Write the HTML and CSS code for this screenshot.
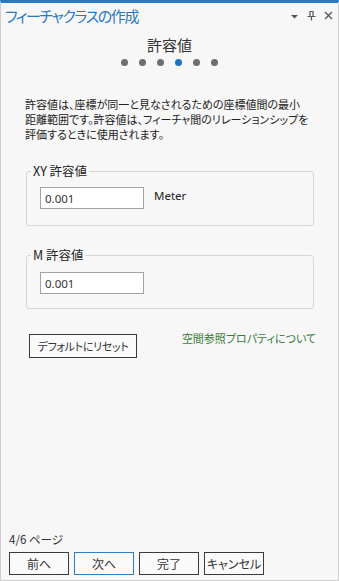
FILE: index.html
```html
<!DOCTYPE html>
<html lang="ja">
<head>
<meta charset="utf-8">
<title>フィーチャクラスの作成</title>
<link rel="stylesheet" href="styles.css">
</head>
<body>
<div class="panel">
  <div class="titlebar">
    <span class="title">フィーチャクラスの作成</span>
    <div class="tools">
      <svg class="ico" width="9" height="9" viewBox="0 0 9 9"><path d="M1 4 L8 4 L4.5 7.5 Z" fill="#555"/></svg>
      <svg class="ico" width="9" height="10" viewBox="0 0 9 10"><path d="M2.5 0.5 H6.5 M3 0.5 V5.5 M6 0.5 V5.5 M0.5 5.5 H8.5 M4.5 5.5 V9.5" stroke="#555" stroke-width="1.2" fill="none"/></svg>
      <svg class="ico" width="9" height="9" viewBox="0 0 9 9"><path d="M1 1 L8 8 M8 1 L1 8" stroke="#555" stroke-width="1.3" fill="none"/></svg>
    </div>
  </div>

  <div class="step">
    <div class="step-title">許容値</div>
    <div class="dots">
      <span class="dot"></span><span class="dot"></span><span class="dot"></span><span class="dot active"></span><span class="dot"></span><span class="dot"></span>
    </div>
  </div>

  <p class="desc">許容値は、座標が同一と見なされるための座標値間の最小<br>距離範囲です。許容値は、フィーチャ間のリレーションシップを<br>評価するときに使用されます。</p>

  <fieldset class="group">
    <legend>XY 許容値</legend>
    <div class="row">
      <input class="field" type="text" value="0.001">
      <span class="unit">Meter</span>
    </div>
  </fieldset>

  <fieldset class="group group-m">
    <legend>M 許容値</legend>
    <div class="row">
      <input class="field" type="text" value="0.001">
    </div>
  </fieldset>

  <div class="actions">
    <button class="btn reset">デフォルトにリセット</button>
    <a class="link" href="#">空間参照プロパティについて</a>
  </div>

  <div class="footer">
    <div class="pages">4/6 ページ</div>
    <div class="buttons">
      <button class="btn nav">前へ</button>
      <button class="btn nav primary">次へ</button>
      <button class="btn nav">完了</button>
      <button class="btn nav">キャンセル</button>
    </div>
  </div>
</div>
</body>
</html>
```

FILE: styles.css
```css
html, body {
  margin: 0;
  padding: 0;
}

body {
  font-family: "Noto Sans CJK JP", "Noto Sans", sans-serif;
  font-feature-settings: "palt";
  color: #222;
  background: #ffffff;
}

.panel {
  width: 339px;
  height: 581px;
  box-sizing: border-box;
  border-top: 3px solid #2a79c4;
  border-left: 1px solid #cfcfcf;
  border-right: 1px solid #cfcfcf;
  border-bottom: 1px solid #cfcfcf;
  background: #f7f7f7;
  display: flex;
  flex-direction: column;
}

.titlebar {
  height: 25px;
  display: flex;
  align-items: center;
  padding-left: 4px;
  padding-right: 5px;
}

.title {
  font-size: 15px;
  line-height: 20px;
  color: #2b78c2;
  letter-spacing: -1.4px;
}

.tools {
  margin-left: auto;
  display: flex;
  align-items: center;
  gap: 8px;
}

.ico {
  display: block;
}

.step {
  display: flex;
  flex-direction: column;
  align-items: center;
}

.step-title {
  margin-top: 7px;
  font-size: 15px;
  line-height: 20px;
  color: #333;
}

.dots {
  margin-top: 4px;
  display: flex;
  gap: 11px;
}

.dot {
  width: 7px;
  height: 7px;
  border-radius: 50%;
  background: #6e6e6e;
}

.dot.active {
  background: #1b74c2;
}

.desc {
  margin: 31px 0 0 0;
  padding-left: 24px;
  font-size: 11px;
  line-height: 15px;
  color: #222;
  white-space: nowrap;
}

.group {
  margin: 21px 24px 0 25px;
  padding: 0 12px 16px 13px;
  border: 1px solid #d6d6d6;
  border-radius: 3px;
  min-width: 0;
}

.group legend {
  margin-left: -9px;
  padding: 0 2px;
  font-size: 12.5px;
  line-height: 16px;
  color: #222;
}

.row {
  margin-top: 8px;
  display: flex;
  align-items: flex-start;
}

.field {
  width: 104px;
  height: 22px;
  box-sizing: border-box;
  margin: 0;
  padding: 0 4px;
  border: 1px solid #a2a2a2;
  background: #ffffff;
  font-family: "Noto Sans", "Noto Sans CJK JP", sans-serif;
  font-size: 11.5px;
  color: #333;
  outline: none;
}

.unit {
  margin-left: 10px;
  font-family: "Noto Sans", "Noto Sans CJK JP", sans-serif;
  font-size: 11.5px;
  line-height: 17px;
  color: #222;
}

.group-m {
  margin-top: 21px;
  padding-bottom: 14px;
}

.group-m .row {
  margin-top: 9px;
}

.actions {
  margin-top: 21px;
  padding: 0 22px 0 28px;
  display: flex;
  align-items: flex-start;
  justify-content: space-between;
}

.btn {
  margin: 0;
  padding: 0;
  box-sizing: border-box;
  border: 1px solid #3a3a3a;
  border-radius: 0;
  background: #fafafa;
  font-family: "Noto Sans CJK JP", sans-serif;
  font-feature-settings: "palt";
  font-size: 12px;
  color: #333;
}

.reset {
  margin-top: 4px;
  width: 108px;
  height: 24px;
  font-size: 11px;
  letter-spacing: -0.3px;
}

.link {
  font-size: 11px;
  line-height: 16px;
  color: #3a7b3a;
  text-decoration: none;
}

.footer {
  margin-top: auto;
  padding: 0 0 5px 8px;
}

.pages {
  font-size: 11.5px;
  line-height: 16px;
  color: #333;
}

.buttons {
  margin-top: 5px;
  display: flex;
  gap: 5px;
}

.nav {
  width: 60px;
  height: 23px;
}

.nav.primary {
  border-color: #2f7fc6;
}
```
